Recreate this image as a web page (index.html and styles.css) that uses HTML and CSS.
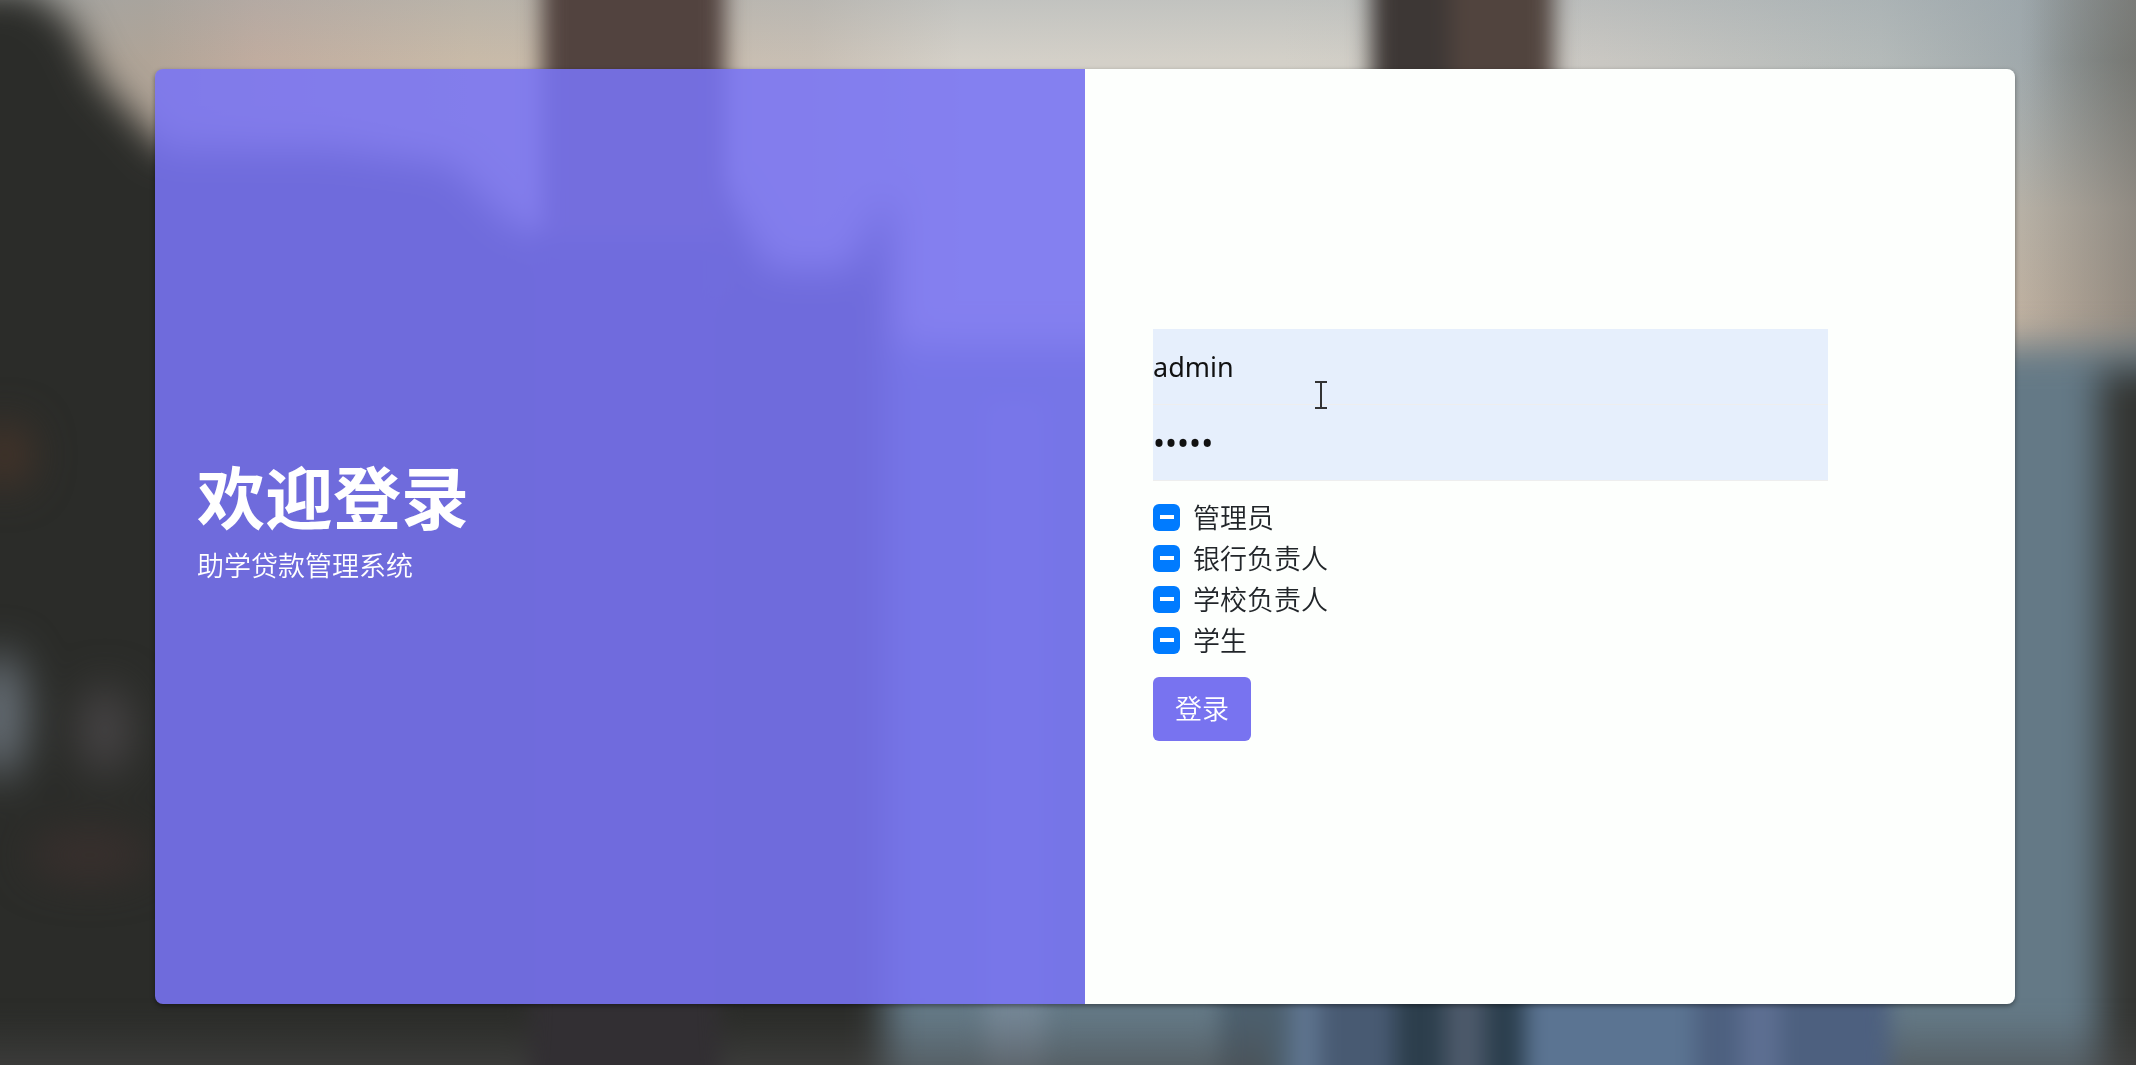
FILE: index.html
```
<!DOCTYPE html>
<html lang="zh-CN">
<head>
  <meta charset="UTF-8">
  <meta name="viewport" content="width=device-width, initial-scale=1">
  <title>登录</title>
  <link rel="stylesheet" href="styles.css">
</head>
<body>

  <!-- Blurred background scene -->
  <svg class="backdrop" viewBox="0 0 2136 1065" preserveAspectRatio="none" aria-hidden="true">
    <defs>
      <linearGradient id="sky" x1="0" y1="0" x2="1" y2="0">
        <stop offset="0" stop-color="#a8a49c"/>
        <stop offset="0.07" stop-color="#b0a497"/>
        <stop offset="0.12" stop-color="#c0ac9f"/>
        <stop offset="0.22" stop-color="#c8baa8"/>
        <stop offset="0.38" stop-color="#c8bfb4"/>
        <stop offset="0.45" stop-color="#d4d0c8"/>
        <stop offset="0.6" stop-color="#d3d0c8"/>
        <stop offset="0.75" stop-color="#c9c7c2"/>
        <stop offset="0.88" stop-color="#b4bab9"/>
        <stop offset="0.95" stop-color="#9fa8ab"/>
        <stop offset="1" stop-color="#788280"/>
      </linearGradient>
      <linearGradient id="topShade" x1="0" y1="0" x2="0" y2="1">
        <stop offset="0" stop-color="#98a4ac" stop-opacity="0.3"/>
        <stop offset="1" stop-color="#98a4ac" stop-opacity="0"/>
      </linearGradient>
      <linearGradient id="dusk" x1="0" y1="0" x2="0" y2="1">
        <stop offset="0" stop-color="#aeb1ad" stop-opacity="0"/>
        <stop offset="0.45" stop-color="#b7b1a6"/>
        <stop offset="1" stop-color="#c4b09c"/>
      </linearGradient>
      <linearGradient id="rightShade" x1="0" y1="0" x2="1" y2="0">
        <stop offset="0" stop-color="#75706a" stop-opacity="0"/>
        <stop offset="1" stop-color="#75706a" stop-opacity="0.6"/>
      </linearGradient>
      <linearGradient id="floor" x1="0" y1="0" x2="0" y2="1">
        <stop offset="0" stop-color="#4a4a4a" stop-opacity="0"/>
        <stop offset="1" stop-color="#4a4a4a" stop-opacity="0.8"/>
      </linearGradient>
      <filter id="fine" x="-20%" y="-20%" width="140%" height="140%" color-interpolation-filters="sRGB">
        <feGaussianBlur stdDeviation="11"/>
      </filter>
      <filter id="soft" x="-20%" y="-20%" width="140%" height="140%" color-interpolation-filters="sRGB">
        <feGaussianBlur stdDeviation="18"/>
      </filter>
      <filter id="softer" x="-80%" y="-80%" width="260%" height="260%" color-interpolation-filters="sRGB">
        <feGaussianBlur stdDeviation="22"/>
      </filter>
    </defs>
    <rect width="2136" height="1065" fill="url(#sky)"/>
    <rect width="2136" height="60" fill="url(#topShade)"/>
    <rect x="1800" y="60" width="336" height="330" fill="url(#dusk)"/>
    <rect x="2020" y="0" width="116" height="390" fill="url(#rightShade)"/>
    <g filter="url(#soft)">
      <path d="M-60 -10 H30 L70 20 L100 80 L165 150 L330 150 L450 165 L510 225 L560 240 L720 190 L770 270 H850 L890 190 V1120 H-60 Z" fill="#2b2c29"/>
      <rect x="885" y="345" width="1300" height="800" fill="#647986"/>
      <rect x="2100" y="370" width="100" height="800" fill="#333431"/>
    </g>
    <g filter="url(#fine)">
      <rect x="542" y="-60" width="183" height="360" fill="#52433f"/>
      <rect x="1371" y="-60" width="90" height="500" fill="#3d3735"/>
      <rect x="1450" y="-60" width="104" height="500" fill="#51443e"/>
      <rect x="530" y="240" width="190" height="920" fill="#322f33"/>
      <rect x="985" y="400" width="60" height="760" fill="#748695"/>
      <rect x="1220" y="900" width="70" height="260" fill="#4c5f6d"/>
      <rect x="1290" y="900" width="30" height="260" fill="#5f7590"/>
      <rect x="1320" y="900" width="75" height="260" fill="#485a72"/>
      <rect x="1395" y="900" width="50" height="260" fill="#2c3e4c"/>
      <rect x="1445" y="900" width="40" height="260" fill="#4d5a6b"/>
      <rect x="1485" y="900" width="40" height="260" fill="#2b3e4d"/>
      <rect x="1525" y="900" width="170" height="260" fill="#5b7492"/>
      <rect x="1695" y="900" width="195" height="260" fill="#4d607f"/>
      <rect x="1740" y="900" width="40" height="260" fill="#5d6f92"/>
      <rect x="-60" y="1015" width="590" height="80" fill="url(#floor)"/>
      <rect x="720" y="1015" width="550" height="80" fill="url(#floor)"/>
      <rect x="1890" y="1015" width="300" height="80" fill="url(#floor)"/>
    </g>
    <g filter="url(#softer)">
      <ellipse cx="0" cy="715" rx="24" ry="64" fill="#6f7881"/>
      <ellipse cx="105" cy="730" rx="24" ry="44" fill="#4a4749"/>
      <ellipse cx="90" cy="855" rx="60" ry="22" fill="#3b302e"/>
      <ellipse cx="5" cy="455" rx="24" ry="30" fill="#4a3529"/>
    </g>
  </svg>

  <main class="login-card">
    <section class="welcome">
      <h1>欢迎登录</h1>
      <p>助学贷款管理系统</p>
    </section>

    <section class="form-side">
      <form class="login-form">
        <input class="text-input" type="text" name="username" value="admin" aria-label="用户名">
        <input class="text-input password" type="password" name="password" value="admin" aria-label="密码">

        <div class="roles">
          <label class="role"><input type="checkbox" name="role" value="admin">管理员</label>
          <label class="role"><input type="checkbox" name="role" value="bank">银行负责人</label>
          <label class="role"><input type="checkbox" name="role" value="school">学校负责人</label>
          <label class="role"><input type="checkbox" name="role" value="student">学生</label>
        </div>

        <button type="submit" class="login-btn">登录</button>

        <!-- Text cursor over the user name box -->
        <svg class="cursor" viewBox="0 0 14 28" aria-hidden="true">
          <path d="M1 1 H13 M7 1 V27 M1 27 H13" fill="none" stroke="#333" stroke-width="2"/>
        </svg>
      </form>
    </section>
  </main>

</body>
</html>
```
FILE: styles.css
```
* {
  box-sizing: border-box;
}

body {
  margin: 0;
  min-height: 100vh;
  padding: 69px 121px 61px 155px;
  display: flex;
  font-family: "Noto Sans", "Noto Sans CJK SC", sans-serif;
  font-size: 27px;
  color: #212529;
  background-color: #2b2d29;
}

/* Background scene fills the window behind the card */
.backdrop {
  position: fixed;
  top: 0;
  left: 0;
  width: 100%;
  height: 100%;
  z-index: -1;
}

.login-card {
  flex: 1;
  display: flex;
  border-radius: 8px;
  overflow: hidden;
  box-shadow: 0 2px 5px rgba(0, 0, 0, 0.4);
}

.welcome,
.form-side {
  width: 50%;
  display: flex;
  flex-direction: column;
  justify-content: center;
}

.welcome {
  padding: 0 42px 30px;
  color: white;
  background-color: rgba(121, 116, 245, 0.88);
}

.welcome h1 {
  margin: 0;
  font-size: 68px;
  line-height: 80px;
  font-weight: 700;
}

.welcome p {
  margin: 8px 0 0;
  line-height: 40px;
  font-weight: 350;
}

.form-side {
  padding: 0 68px 4px;
  background-color: #fdfffd;
}

.login-form {
  position: relative;
  width: 85%;
}

.text-input {
  display: block;
  width: 100%;
  height: 76px;
  padding: 0;
  border: none;
  border-bottom: 1px solid #eee;
  border-radius: 0;
  background-color: #e6effc;
  font: inherit;
  color: #111;
  outline: none;
}

.password {
  font-size: 32px;
}

.roles {
  margin: 16px 0;
}

.role {
  display: flex;
  align-items: center;
  gap: 13px;
  line-height: 41px;
  font-weight: 350;
}

.role input {
  appearance: none;
  width: 27px;
  height: 27px;
  margin: 0;
  border-radius: 6px;
  background: linear-gradient(white, white) center / 14px 4px no-repeat #007bff;
}

.login-btn {
  padding: 12px 22px;
  border: none;
  border-radius: 6px;
  background-color: #7873f0;
  color: white;
  font: inherit;
  font-weight: 350;
  line-height: 40px;
  cursor: pointer;
}

.login-btn:hover {
  background-color: #625cf0;
}

.cursor {
  position: absolute;
  top: 52px;
  left: 161px;
  width: 14px;
  height: 28px;
}
```
